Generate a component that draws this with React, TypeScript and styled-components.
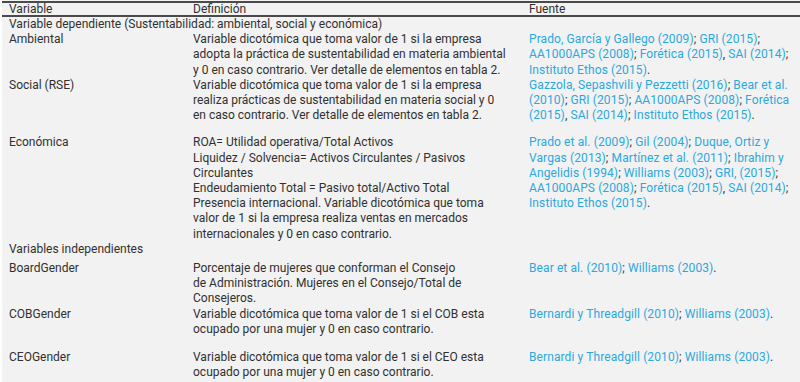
import React from "react";
import styled, { createGlobalStyle } from "styled-components";

const GlobalStyle = createGlobalStyle`
  html, body {
    margin: 0;
    padding: 0;
    background: #ffffff;
  }
  body {
    font-family: "Roboto", "Liberation Sans", sans-serif;
  }
`;

const Sheet = styled.div`
  margin-left: 2px;
  height: 382px;
  padding-top: 1px;
  box-sizing: border-box;
  background: #f2f2f2;
  color: #303030;
  font-size: 12px;
  overflow: hidden;
`;

const HeadRow = styled.div`
  display: grid;
  grid-template-columns: 184px 336px 1fr;
  padding-left: 7px;
  line-height: 12px;
  border-top: 2px solid #4a4a4a;
  border-bottom: 2px solid #4a4a4a;
`;

const Row = styled.div<{ $after?: number }>`
  display: grid;
  grid-template-columns: 184px 336px 1fr;
  padding-left: 7px;
  line-height: 15.2px;
  padding-bottom: ${(p) => p.$after ?? 0}px;
`;

const Section = styled.div<{ $after?: number }>`
  padding-left: 7px;
  line-height: 15.2px;
  padding-bottom: ${(p) => p.$after ?? 0}px;
`;

const Cell = styled.div`
  white-space: nowrap;
`;

const SourceCell = styled(Cell)`
  letter-spacing: 0.1px;
`;

const Line = styled.div`
  white-space: nowrap;
`;

const Ref = styled.span`
  color: #2aa8e0;
`;

interface Entry {
  variable: string;
  definition: string[];
  source: string[];
  after?: number;
}

// refs are marked with {braces}; the rest stays in the body colour
const renderSource = (text: string) =>
  text.split(/(\{[^}]*\})/).map((part, i) =>
    part.startsWith("{") ? (
      <Ref key={i}>{part.slice(1, -1)}</Ref>
    ) : (
      <React.Fragment key={i}>{part}</React.Fragment>
    ),
  );

const dependent: Entry[] = [
  {
    variable: "Ambiental",
    definition: [
      "Variable dicotómica que toma valor de 1 si la empresa",
      "adopta la práctica de sustentabilidad en materia ambiental",
      "y 0 en caso contrario. Ver detalle de elementos en tabla 2.",
    ],
    source: [
      "{Prado, García y Gallego (2009)}; {GRI (2015)};",
      "{AA1000APS (2008)}; {Forética (2015)}, {SAI (2014)};",
      "{Instituto Ethos (2015)}.",
    ],
  },
  {
    variable: "Social (RSE)",
    definition: [
      "Variable dicotómica que toma valor de 1 si la empresa",
      "realiza prácticas de sustentabilidad en materia social y 0",
      "en caso contrario. Ver detalle de elementos en tabla 2.",
    ],
    source: [
      "{Gazzola, Sepashvili y Pezzetti (2016)}; {Bear et al.}",
      "{(2010)}; {GRI (2015)}; {AA1000APS (2008)}; {Forética}",
      "{(2015)}, {SAI (2014)}; {Instituto Ethos (2015)}.",
    ],
    after: 12,
  },
  {
    variable: "Económica",
    definition: [
      "ROA= Utilidad operativa/Total Activos",
      "Liquidez / Solvencia= Activos Circulantes / Pasivos",
      "Circulantes",
      "Endeudamiento Total = Pasivo total/Activo Total",
      "Presencia internacional. Variable dicotómica que toma",
      "valor de 1 si la empresa realiza ventas en mercados",
      "internacionales y 0 en caso contrario.",
    ],
    source: [
      "{Prado et al. (2009)}; {Gil (2004)}; {Duque, Ortiz y}",
      "{Vargas (2013)}; {Martínez et al. (2011)}; {Ibrahim y}",
      "{Angelidis (1994)}; {Williams (2003)}; {GRI, (2015)};",
      "{AA1000APS (2008)}; {Forética (2015)}, {SAI (2014)};",
      "{Instituto Ethos (2015)}.",
    ],
  },
];

const independent: Entry[] = [
  {
    variable: "BoardGender",
    definition: [
      "Porcentaje de mujeres que conforman el Consejo",
      "de Administración. Mujeres en el Consejo/Total de",
      "Consejeros.",
    ],
    source: ["{Bear et al. (2010)}; {Williams (2003)}."],
  },
  {
    variable: "COBGender",
    definition: [
      "Variable dicotómica que toma valor de 1 si el COB esta",
      "ocupado por una mujer y 0 en caso contrario.",
    ],
    source: ["{Bernardi y Threadgill (2010)}; {Williams (2003)}."],
    after: 13,
  },
  {
    variable: "CEOGender",
    definition: [
      "Variable dicotómica que toma valor de 1 si el CEO esta",
      "ocupado por una mujer y 0 en caso contrario.",
    ],
    source: ["{Bernardi y Threadgill (2010)}; {Williams (2003)}."],
  },
];

const EntryRow: React.FC<{ entry: Entry }> = ({ entry }) => (
  <Row $after={entry.after}>
    <Cell>{entry.variable}</Cell>
    <Cell>
      {entry.definition.map((l, i) => (
        <Line key={i}>{l}</Line>
      ))}
    </Cell>
    <SourceCell>
      {entry.source.map((l, i) => (
        <Line key={i}>{renderSource(l)}</Line>
      ))}
    </SourceCell>
  </Row>
);

export default function App() {
  return (
    <>
      <GlobalStyle />
      <Sheet>
        <HeadRow>
          <Cell>Variable</Cell>
          <Cell>Definición</Cell>
          <Cell>Fuente</Cell>
        </HeadRow>
        <Section>
          Variable dependiente (Sustentabilidad: ambiental, social y económica)
        </Section>
        {dependent.map((e) => (
          <EntryRow key={e.variable} entry={e} />
        ))}
        <Section $after={4}>Variables independientes</Section>
        {independent.map((e) => (
          <EntryRow key={e.variable} entry={e} />
        ))}
      </Sheet>
    </>
  );
}
